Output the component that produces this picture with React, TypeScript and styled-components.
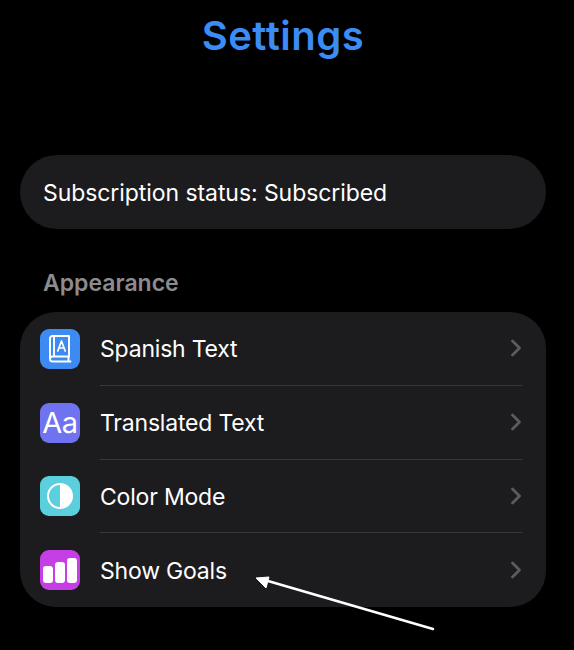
import * as React from 'react';
import styled, { createGlobalStyle } from 'styled-components';

const GlobalStyle = createGlobalStyle`
  html, body {
    margin: 0;
    padding: 0;
    background: #000000;
  }
  body {
    font-family: Inter, 'Liberation Sans', sans-serif;
    color: #ffffff;
  }
`;

const Page = styled.div`
  position: relative;
  box-sizing: border-box;
  width: 574px;
  height: 650px;
  padding: 0 28px 0 20px;
  overflow: hidden;
  background: #000000;
`;

const Title = styled.h1`
  margin: 11px 0 0;
  font-size: 40px;
  line-height: 50px;
  font-weight: 600;
  letter-spacing: 0.5px;
  text-align: center;
  color: #3b8cf5;
`;

const StatusCard = styled.div`
  display: flex;
  align-items: center;
  box-sizing: border-box;
  height: 74px;
  margin-top: 94px;
  padding: 2px 23px 0;
  border-radius: 37px;
  background: #1c1c1e;
  font-size: 23px;
  letter-spacing: -0.07px;
`;

const SectionLabel = styled.h2`
  margin: 38px 0 0 23px;
  font-size: 23px;
  line-height: 32px;
  font-weight: 600;
  color: #8b8b90;
`;

const List = styled.div`
  display: flex;
  flex-direction: column;
  margin-top: 13px;
  height: 295px;
  border-radius: 36px;
  background: #1c1c1e;
`;

const Row = styled.div`
  display: flex;
  flex: 1;
  align-items: center;
  padding: 0 24px 0 20px;
  gap: 20px;
`;

const IconTile = styled.div<{ $color: string }>`
  display: flex;
  flex: none;
  align-items: center;
  justify-content: center;
  width: 40px;
  height: 40px;
  border-radius: 9px;
  background: ${(p) => p.$color};
`;

const AaText = styled.span`
  font-size: 29px;
  line-height: 1;
  letter-spacing: -0.5px;
  color: #ffffff;
`;

const RowBody = styled.div`
  display: flex;
  flex: 1;
  align-self: stretch;
  align-items: center;
  justify-content: space-between;
  border-bottom: 1.5px solid #38383a;

  ${Row}:last-child & {
    border-bottom: none;
  }
`;

const RowLabel = styled.span`
  font-size: 23px;
  letter-spacing: -0.2px;
  padding-top: 2px;
`;

const ChevronBox = styled.svg`
  flex: none;
`;

const Arrow = styled.svg`
  position: absolute;
  top: 0;
  left: 0;
  pointer-events: none;
`;

const BookIcon = () => (
  <svg width="24" height="28" viewBox="0 0 24 28" fill="none" stroke="#fff" strokeWidth="1.9" strokeLinejoin="round" strokeLinecap="round">
    <path d="M2 23V3.5A2.5 2.5 0 0 1 4.5 1H21v20.5H4.5A2.5 2.5 0 0 0 2 24a2.5 2.5 0 0 0 2.5 2.5H22.5" />
    <path d="M6 2v19" />
    <path d="M9.8 16l3.7-10 3.7 10M11 13h5" strokeWidth="1.7" />
    <path d="M20.5 22v4" />
  </svg>
);

const ContrastIcon = () => (
  <svg width="28" height="28" viewBox="0 0 28 28">
    <circle cx="14" cy="14" r="12" fill="none" stroke="#fff" strokeWidth="2" />
    <path d="M14 2a12 12 0 0 1 0 24z" fill="#fff" />
  </svg>
);

const BarsIcon = () => (
  <svg width="34" height="25" viewBox="0 0 34 25" fill="#fff">
    <rect x="0" y="8" width="10" height="17" rx="3" />
    <rect x="12" y="4" width="10" height="21" rx="3" />
    <rect x="24" y="0" width="10" height="25" rx="3" />
  </svg>
);

const Chevron = () => (
  <ChevronBox width="12" height="18" viewBox="0 0 12 18" fill="none" stroke="#5c5c60" strokeWidth="2.8" strokeLinecap="round" strokeLinejoin="round">
    <path d="M2.5 2l7 7-7 7" />
  </ChevronBox>
);

const items = [
  { label: 'Spanish Text', color: '#3d8bf2', icon: <BookIcon /> },
  { label: 'Translated Text', color: '#6f73f0', icon: <AaText>Aa</AaText> },
  { label: 'Color Mode', color: '#5ccfde', icon: <ContrastIcon /> },
  { label: 'Show Goals', color: '#c63fe6', icon: <BarsIcon /> },
];

export default function App() {
  return (
    <Page>
      <GlobalStyle />
      <Title>Settings</Title>
      <StatusCard>Subscription status: Subscribed</StatusCard>
      <SectionLabel>Appearance</SectionLabel>
      <List>
        {items.map(({ label, color, icon }) => (
          <Row key={label}>
            <IconTile $color={color}>{icon}</IconTile>
            <RowBody>
              <RowLabel>{label}</RowLabel>
              <Chevron />
            </RowBody>
          </Row>
        ))}
      </List>
      <Arrow width="574" height="650" viewBox="0 0 574 650">
        <path d="M433 629L268 581" stroke="#fff" strokeWidth="2.5" strokeLinecap="round" />
        <path d="M256 578L269 577L266 588Z" fill="#fff" stroke="#fff" strokeWidth="1" strokeLinejoin="round" />
      </Arrow>
    </Page>
  );
}
